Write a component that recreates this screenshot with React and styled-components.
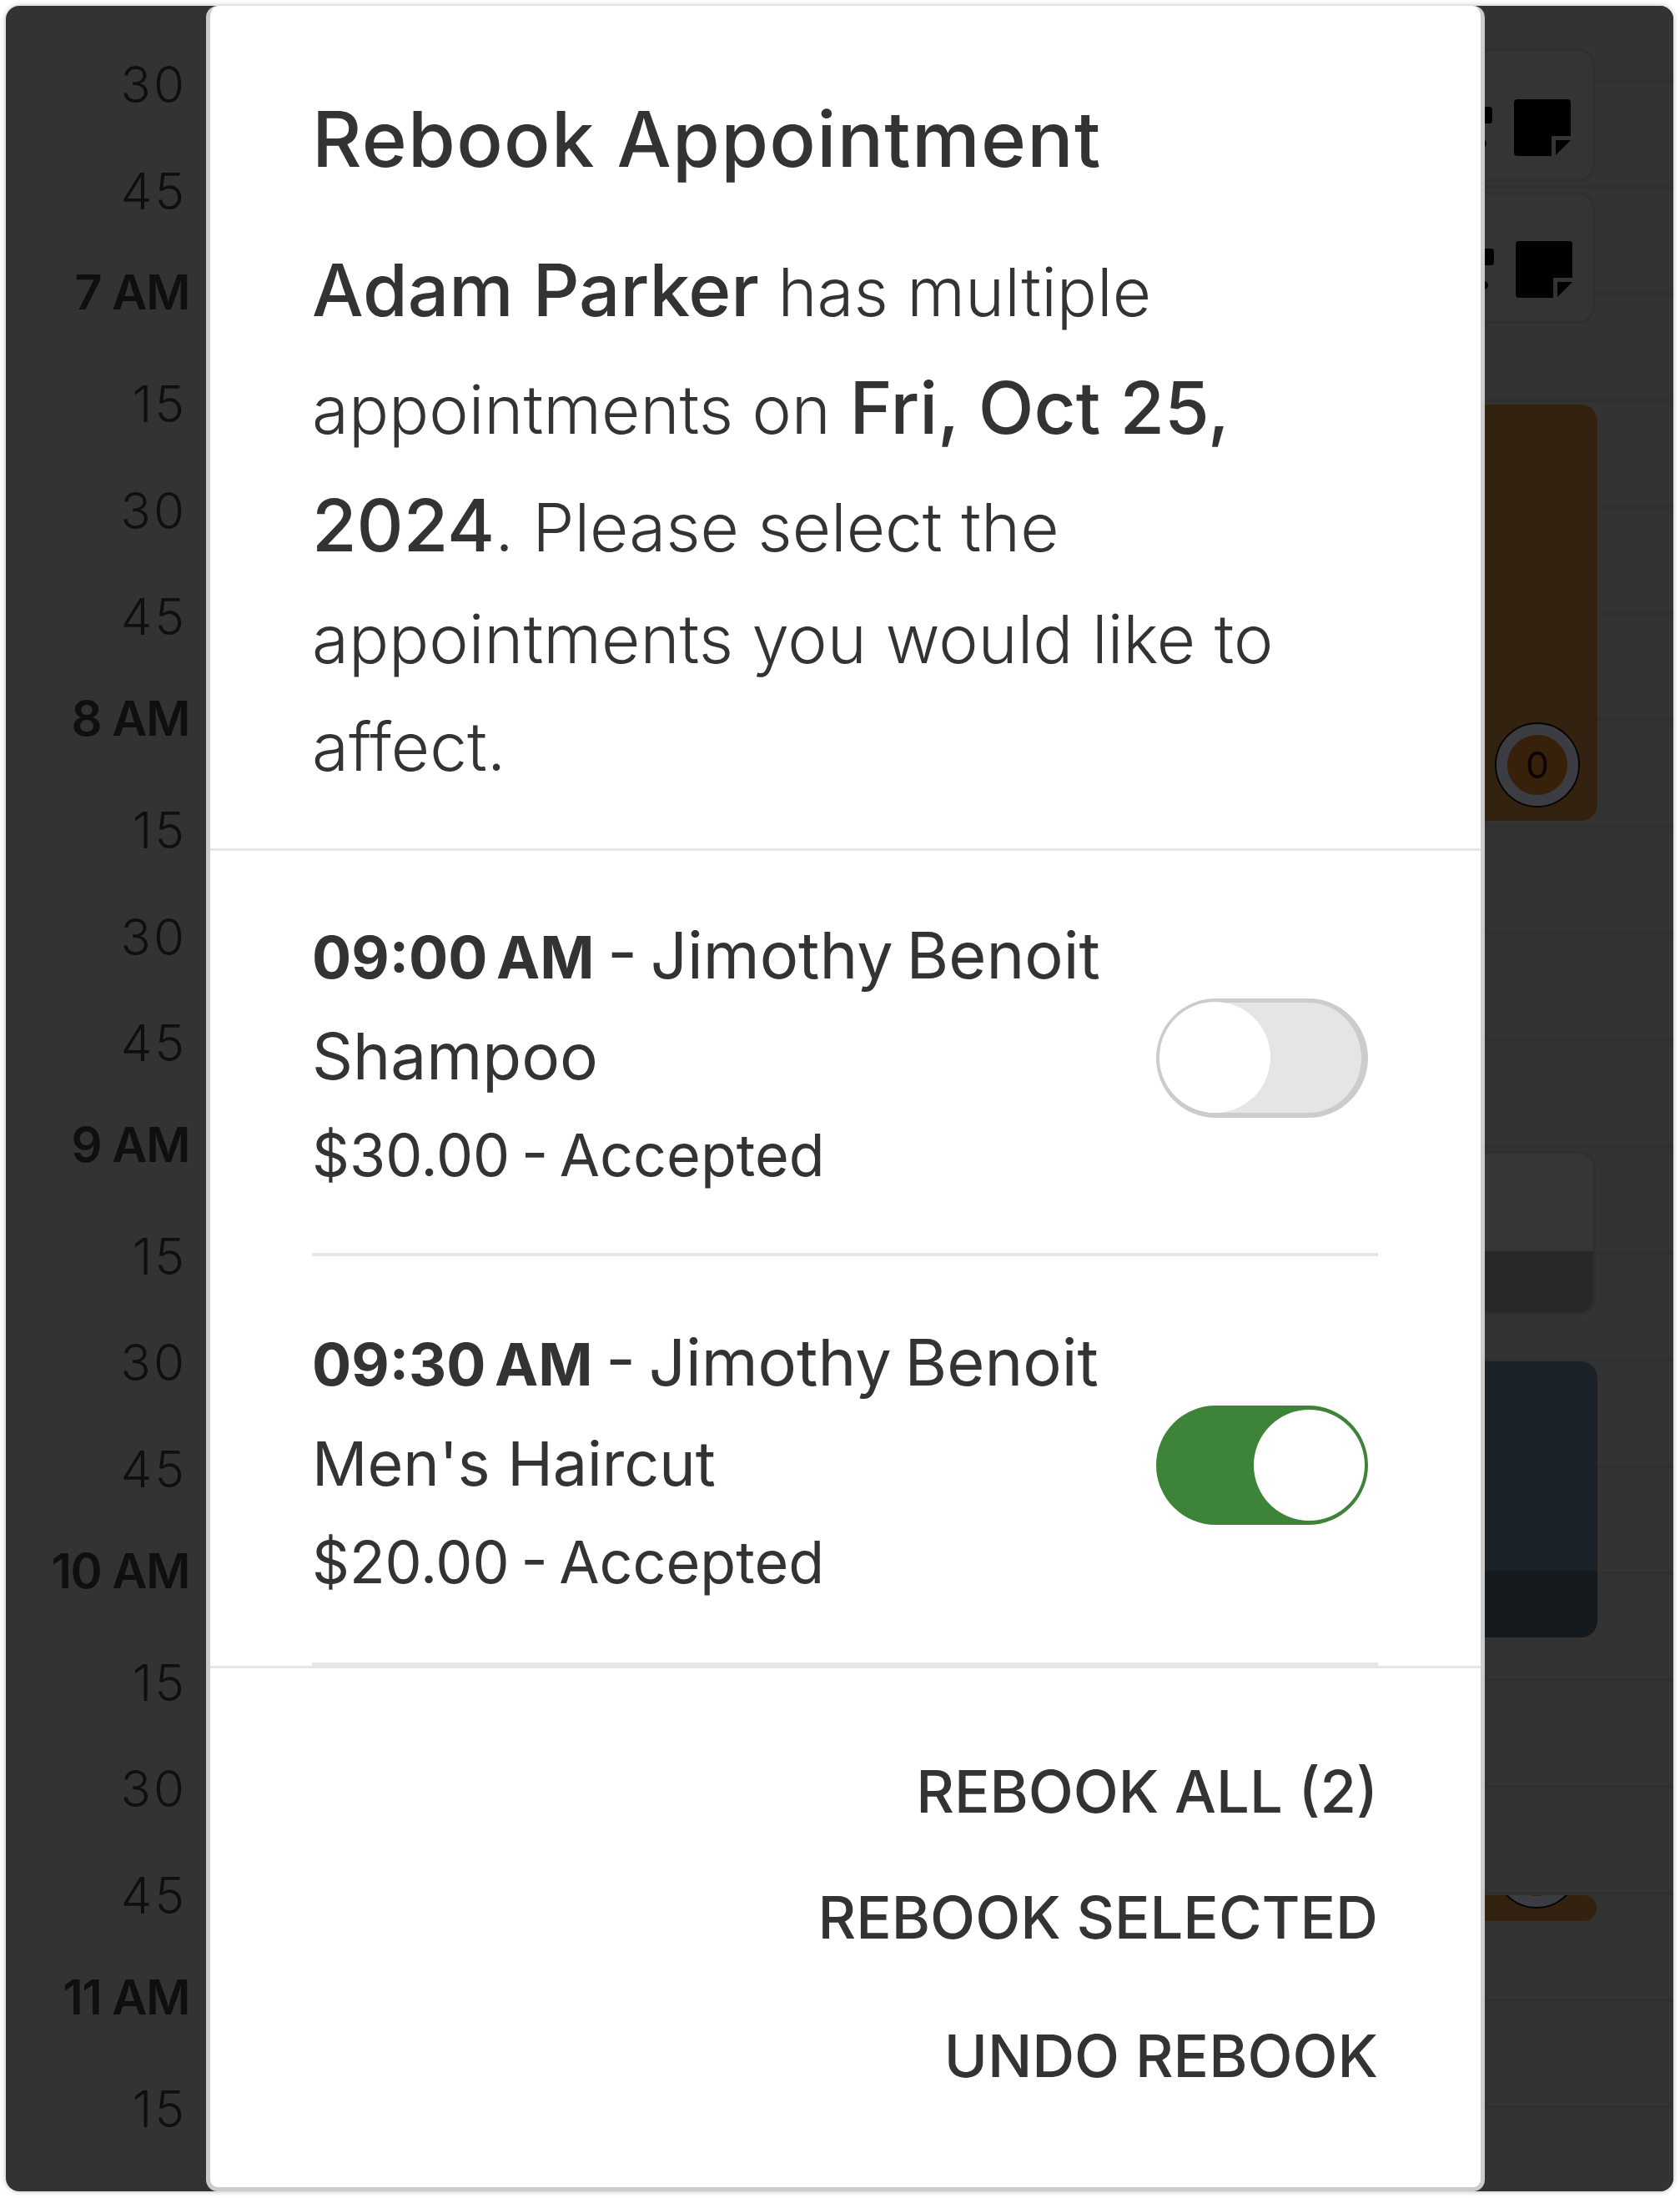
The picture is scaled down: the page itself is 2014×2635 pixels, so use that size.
import React from "react";
import styled, { createGlobalStyle } from "styled-components";

const Global = createGlobalStyle`
  html, body { margin: 0; padding: 0; background: #fff; }
  body { font-family: Inter, "Noto Sans", "Liberation Sans", sans-serif; color: #333; }
  * { box-sizing: border-box; }
`;

const Page = styled.div`
  width: 2014px;
  height: 2635px;
  padding: 7px 8px 8px 7px;
`;

const Frame = styled.div`
  position: relative;
  height: 100%;
  display: grid;
  grid-template-columns: 240px 1fr;
  background: #333;
  border-radius: 16px;
  overflow: hidden;
  box-shadow: 0 0 6px rgba(0, 0, 0, 0.28);
`;

const TimeColumn = styled.div`
  padding-top: 30px;
  display: flex;
  flex-direction: column;
`;

const TimeLabel = styled.div`
  height: 127.72px;
  display: flex;
  align-items: center;
  justify-content: flex-end;
  font-size: ${(p) => (p.$hour ? 58 : 60)}px;
  font-weight: ${(p) => (p.$hour ? 600 : 350)};
  letter-spacing: ${(p) => (p.$hour ? -1.5 : 3)}px;
  color: #0f0f0f;
  padding-right: ${(p) => (p.$hour ? 20 : 23)}px;
  padding-bottom: ${(p) => (p.$hour ? 12 : 0)}px;
`;

const Calendar = styled.div`
  display: flex;
  flex-direction: column;
  align-items: flex-start;
  padding-left: 100px;
  overflow: hidden;
  background: linear-gradient(to bottom, #333 124.83px, #2f2f2f 124.83px) 0 -36.83px / 100% 127.83px repeat-y;
`;

const Event = styled.div`
  flex: none;
  display: flex;
  flex-direction: column;
  width: ${(p) => p.$width}px;
  height: ${(p) => p.$height}px;
  margin-top: ${(p) => p.$gap}px;
  background: ${(p) => p.$bg};
  border-radius: 20px;
  overflow: hidden;
`;

const OutlinedEvent = styled(Event)`
  border: 3px solid #2f2f2f;
`;

const NoteCard = styled(OutlinedEvent)`
  flex-direction: row;
  justify-content: flex-end;
  align-items: flex-start;
  gap: 26px;
  padding: ${(p) => p.$padTop}px ${(p) => p.$padRight}px 0 0;
`;

const BadgeEvent = styled(Event)`
  flex-direction: row;
  justify-content: flex-end;
  align-items: flex-end;
  padding: 0 22px ${(p) => p.$padBottom}px 0;
`;

const EventBody = styled.div`
  flex: 1;
`;

const EventFooter = styled.div`
  flex: none;
  height: ${(p) => p.$height}px;
  background: ${(p) => p.$bg};
`;

const NoteSvg = styled.svg`
  flex: none;
  width: 68px;
  height: 68px;
  fill: #000;
`;

const FragmentSvg = styled.svg`
  flex: none;
  width: 26px;
  height: 60px;
  margin-top: 9px;
  fill: #000;
`;

const CountBadge = styled.div`
  flex: none;
  width: 100px;
  height: 100px;
  border-radius: 50%;
  background: #38210b;
  border: 14px solid #3b3d42;
  outline: 2px solid #050505;
  outline-offset: -1px;
  display: flex;
  align-items: center;
  justify-content: center;
  font-size: 44px;
  color: #0a0500;
`;

const Modal = styled.div`
  position: absolute;
  left: 240px;
  top: 0;
  width: 1533px;
  height: 2620px;
  background: #fff;
  border: 5px solid #ccc;
  border-top: 0;
  border-radius: 14px;
  display: flex;
  flex-direction: column;
`;

const Header = styled.header`
  height: 1013px;
  padding: 107px 120px 0 122px;
  border-bottom: 3px solid #e6e6e6;
`;

const Title = styled.h1`
  margin: 0 0 58px;
  font-size: 92px;
  line-height: 106px;
  font-weight: 500;
  letter-spacing: 1.3px;
  color: #333;
`;

const Intro = styled.p`
  margin: 0;
  font-size: 80px;
  line-height: 1.62;
  font-weight: 300;
  color: #333;
  strong { font-size: 87px; font-weight: 500; }
`;

const List = styled.div`
  height: 980px;
  padding: 0 123px 0 122px;
  border-bottom: 3px solid #e6e6e6;
  display: flex;
  flex-direction: column;
`;

const Row = styled.div`
  flex: ${(p) => (p.$height ? `0 0 ${p.$height}px` : "1")};
  display: flex;
  align-items: center;
  justify-content: space-between;
  padding: 8px 12px 0 0;
  border-bottom: 4px solid #e6e6e6;
`;

const RowText = styled.div`
  font-weight: 400;
  color: #333;
`;

const RowLine = styled.div`
  font-size: ${(p) => p.$size}px;
  line-height: 118.5px;
  word-spacing: ${(p) => p.$wordSpacing || 0}px;
  strong { font-size: 70px; font-weight: 700; }
`;

const Toggle = styled.div`
  flex: none;
  display: flex;
  align-items: center;
  justify-content: ${(p) => (p.$on ? "flex-end" : "flex-start")};
  width: 254px;
  height: 143px;
  margin-top: 6px;
  border-radius: 72px;
  background: ${(p) => (p.$on ? "#3e8438" : "#e5e5e5")};
  border-style: solid;
  border-color: ${(p) => (p.$on ? "#3e8438" : "#ccc")};
  border-width: ${(p) => (p.$on ? "5px 4px" : "5px 8px 6px 4px")};
  &::after {
    content: "";
    flex: none;
    width: 133px;
    height: 133px;
    border-radius: 50%;
    background: #fff;
  }
`;

const Actions = styled.div`
  flex: 1;
  display: flex;
  flex-direction: column;
  align-items: flex-end;
  padding: 103px 123px 0 0;
`;

const ActionButton = styled.button`
  all: unset;
  font-family: inherit;
  font-size: 70.5px;
  line-height: 90px;
  font-weight: 500;
  color: #333;
  margin-bottom: ${(p) => p.$gap}px;
`;

const labels = ["30","45","7 AM","15","30","45","8 AM","15","30","45","9 AM","15","30","45","10 AM","15","30","45","11 AM","15"];

const NoteIcon = () => (
  <NoteSvg viewBox="0 0 68 68">
    <path d="M4 0H64a4 4 0 0 1 4 4V44H45V68H4a4 4 0 0 1-4-4V4a4 4 0 0 1 4-4z" />
    <path d="M50 49H68L50 67z" />
  </NoteSvg>
);

const IconFragment = () => (
  <FragmentSvg viewBox="0 0 26 60">
    <rect x="0" y="0" width="26" height="20" rx="4" />
    <circle cx="14" cy="44" r="5" />
  </FragmentSvg>
);

const appointments = [
  { time: "09:00 AM", svc: "Shampoo", svcSize: 76.5, price: "$30.00", on: false, height: 486 },
  { time: "09:30 AM", svc: "Men's Haircut", svcSize: 73.5, price: "$20.00", on: true },
];

export default function App() {
  return (
    <Page>
      <Global />
      <Frame>
        <TimeColumn>
          {labels.map((l, i) => (
            <TimeLabel key={i} $hour={l.includes("AM")}>{l}</TimeLabel>
          ))}
        </TimeColumn>
        <Calendar>
          <NoteCard $gap={51} $height={160} $bg="#343434" $width={1565} $padTop={58} $padRight={26}>
            <IconFragment />
            <NoteIcon />
          </NoteCard>
          <NoteCard $gap={12} $height={158} $bg="#343434" $width={1565} $padTop={56} $padRight={24}>
            <IconFragment />
            <NoteIcon />
          </NoteCard>
          <BadgeEvent $gap={97} $height={499} $bg="#33220f" $width={1568} $padBottom={17}>
            <CountBadge>0</CountBadge>
          </BadgeEvent>
          <OutlinedEvent $gap={396} $height={197} $bg="#363636" $width={1566}>
            <EventBody />
            <EventFooter $height={74} $bg="#282828" />
          </OutlinedEvent>
          <Event $gap={55} $height={331} $bg="#1b2329" $width={1568}>
            <EventBody />
            <EventFooter $height={80} $bg="#141a1d" />
          </Event>
          <BadgeEvent $gap={309} $height={31} $bg="#33220f" $width={1567} $padBottom={16}>
            <CountBadge />
          </BadgeEvent>
        </Calendar>
        <Modal>
          <Header>
            <Title>Rebook Appointment</Title>
            <Intro>
              <strong>Adam Parker</strong> has multiple appointments on <strong>Fri, Oct 25, 2024</strong>. Please select the appointments you would like to affect.
            </Intro>
          </Header>
          <List>
            {appointments.map((a) => (
              <Row key={a.time} $height={a.height}>
                <RowText>
                  <RowLine $size={77.5} $wordSpacing={-6}><strong>{a.time}</strong> - Jimothy Benoit</RowLine>
                  <RowLine $size={a.svcSize}>{a.svc}</RowLine>
                  <RowLine $size={70} $wordSpacing={-6}>{a.price} - Accepted</RowLine>
                </RowText>
                <Toggle $on={a.on} />
              </Row>
            ))}
          </List>
          <Actions>
            <ActionButton $gap={61}>REBOOK ALL (2)</ActionButton>
            <ActionButton $gap={76}>REBOOK SELECTED</ActionButton>
            <ActionButton $gap={0}>UNDO REBOOK</ActionButton>
          </Actions>
        </Modal>
      </Frame>
    </Page>
  );
}
